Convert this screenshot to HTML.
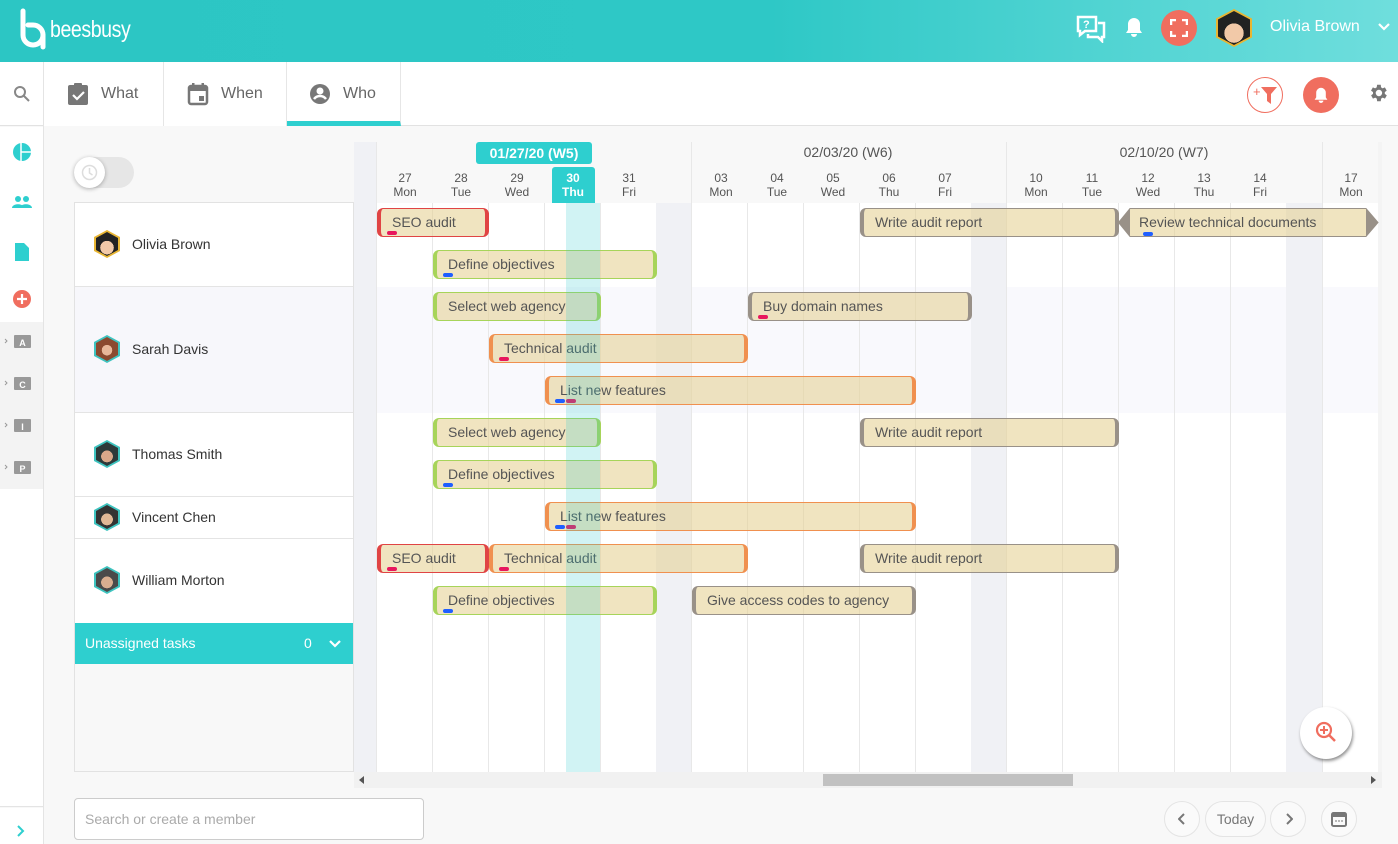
<!DOCTYPE html>
<html><head><meta charset="utf-8">
<style>
*{box-sizing:border-box;margin:0;padding:0}
body{width:1398px;height:844px;overflow:hidden;font-family:"Liberation Sans",sans-serif;background:#f8f8f8;position:relative;color:#333}
.a{position:absolute}
.top{left:0;top:0;width:1398px;height:62px;background:linear-gradient(90deg,#2cc6c4 0%,#2ec8c6 55%,#6fdedd 100%)}
.tab{top:62px;height:64px;background:#fff;border-right:1px solid #e6e6e6;font-size:16px;color:#666;display:flex;align-items:center}
.vl{width:1px;background:#e8e8e8}
.day{width:56px;text-align:center;font-size:12px;color:#555;line-height:14px}
.bar{height:29px;border-radius:6px;background:rgba(228,206,140,.55);border:1px solid;border-left-width:4px;border-right-width:4px;font-size:14px;color:#555;padding-left:11px;line-height:26px;white-space:nowrap}
.r{border-color:#e04444}.g{border-color:#a7d45a}.o{border-color:#f0904f}.y{border-color:#999188}
.tg{position:absolute;bottom:1px;width:10px;height:4px;border-radius:2px}
.pk{background:#e8175d}.bl{background:#1f5fff}
.name{font-size:14px;color:#333;left:132px}
.hex{width:26px;height:28px;clip-path:polygon(50% 0,100% 25%,100% 75%,50% 100%,0 75%,0 25%)}
.rb{border:1px solid #e4e4e4;border-radius:50%;background:#fafafa}
</style></head><body>
<div class="a top"></div>
<svg class="a" style="left:18px;top:8px" width="30" height="42" viewBox="0 0 30 42"><path d="M5 3v24a10 10 0 1 0 10-10h-5" fill="none" stroke="#fff" stroke-width="5" stroke-linecap="round"/><path d="M25 27v12" stroke="#fff" stroke-width="5" stroke-linecap="round"/></svg>
<div class="a" style="left:50px;top:16px;color:#fff;font-size:23px;letter-spacing:-0.5px;transform:scaleX(.85);transform-origin:left">beesbusy</div>
<svg class="a" style="left:1076px;top:15px" width="30" height="28" viewBox="0 0 30 28"><path d="M2 2h18v14H9l-5 4v-4H2z" fill="none" stroke="#fff" stroke-width="2.5"/><path d="M22 8h6v14h-2v4l-4-4H12v-3" fill="none" stroke="#fff" stroke-width="2.5"/><text x="7" y="13" fill="#fff" font-size="11" font-family="Liberation Sans" font-weight="bold">?</text></svg>
<svg class="a" style="left:1124px;top:16px" width="20" height="22" viewBox="0 0 20 22"><path d="M10 2a6 6 0 0 0-6 6v6l-2 3h16l-2-3V8a6 6 0 0 0-6-6z M7 18a3 3 0 0 0 6 0z" fill="#fff"/></svg>
<div class="a" style="left:1161px;top:10px;width:36px;height:36px;border-radius:50%;background:#f06e5f"></div>
<svg class="a" style="left:1170px;top:19px" width="18" height="18" viewBox="0 0 18 18" fill="none" stroke="#fff" stroke-width="2.5"><path d="M1 6V1h5M12 1h5v5M17 12v5h-5M6 17H1v-5"/></svg>
<div class="a hex" style="left:1216px;top:9px;width:36px;height:38px;background:#e8b533"></div>
<div class="a hex" style="left:1218px;top:11px;width:32px;height:34px;background:radial-gradient(circle at 50% 65%,#f2c9a8 0 35%,#222 36%)"></div>
<div class="a" style="left:1270px;top:18px;color:#fff;font-size:16px">Olivia Brown</div>
<svg class="a" style="left:1377px;top:22px" width="14" height="10"><path d="M2 2l5 5 5-5" fill="none" stroke="#fff" stroke-width="2.2"/></svg>
<div class="a" style="left:0;top:62px;width:1398px;height:64px;background:#fff;border-bottom:1px solid #e2e2e2"></div>
<div class="a" style="left:43px;top:62px;width:1px;height:782px;background:#e4e4e4"></div>
<svg class="a" style="left:13px;top:85px" width="18" height="18"><circle cx="7" cy="7" r="5" fill="none" stroke="#888" stroke-width="2"/><path d="M11 11l5 5" stroke="#888" stroke-width="2"/></svg>
<div class="a tab" style="left:44px;width:120px"><svg style="margin-left:23px" width="22" height="24" viewBox="0 0 22 24"><rect x="1" y="3" width="20" height="20" rx="2" fill="#777"/><rect x="7" y="1" width="8" height="5" rx="1" fill="#777"/><path d="M6 13l4 4 7-7" fill="none" stroke="#fff" stroke-width="2.2"/></svg><span style="margin-left:12px">What</span></div>
<div class="a tab" style="left:164px;width:123px"><svg style="margin-left:23px" width="22" height="24" viewBox="0 0 22 24"><rect x="2" y="4" width="18" height="18" rx="2" fill="none" stroke="#777" stroke-width="2.5"/><rect x="2" y="4" width="18" height="5" fill="#777"/><rect x="5" y="1" width="2.5" height="5" fill="#777"/><rect x="14.5" y="1" width="2.5" height="5" fill="#777"/><rect x="12" y="14" width="5" height="5" fill="#777"/></svg><span style="margin-left:12px">When</span></div>
<div class="a tab" style="left:287px;width:114px;border-bottom:5px solid #2ecfcf"><svg style="margin-left:22px;margin-top:4px" width="22" height="22" viewBox="0 0 22 22"><circle cx="11" cy="11" r="10" fill="#777"/><circle cx="11" cy="8" r="3.5" fill="#fff"/><path d="M5 16c3-4 9-4 12 0" fill="none" stroke="#fff" stroke-width="2.5"/></svg><span style="margin-left:12px;margin-top:4px">Who</span></div>
<div class="a" style="left:1247px;top:77px;width:36px;height:36px;border-radius:50%;border:1.5px solid #f06e5f;background:#fff"></div>
<div class="a" style="left:1253px;top:84px;color:#f06e5f;font-size:13px">+</div>
<svg class="a" style="left:1261px;top:87px" width="16" height="17"><path d="M0 0h16l-6 7v10l-4-3V7z" fill="#f06e5f"/></svg>
<div class="a" style="left:1303px;top:77px;width:36px;height:36px;border-radius:50%;background:#f06e5f"></div>
<svg class="a" style="left:1313px;top:86px" width="16" height="18" viewBox="0 0 20 22"><path d="M10 2a6 6 0 0 0-6 6v6l-2 3h16l-2-3V8a6 6 0 0 0-6-6z M7 18a3 3 0 0 0 6 0z" fill="#fff"/></svg>
<svg class="a" style="left:1367px;top:82px" width="22" height="22" viewBox="0 0 24 24"><path fill="#777" d="M19.4 13a7.5 7.5 0 0 0 0-2l2.1-1.6-2-3.5-2.5 1a7 7 0 0 0-1.7-1L15 3h-4l-.4 2.9a7 7 0 0 0-1.7 1l-2.5-1-2 3.5L6.6 11a7.5 7.5 0 0 0 0 2l-2.1 1.6 2 3.5 2.5-1a7 7 0 0 0 1.7 1L11 21h4l.4-2.9a7 7 0 0 0 1.7-1l2.5 1 2-3.5zM13 15.5a3.5 3.5 0 1 1 0-7 3.5 3.5 0 0 1 0 7z"/></svg>
<div class="a" style="left:0;top:127px;width:43px;height:195px;background:#fff"></div>
<div class="a" style="left:0;top:322px;width:43px;height:167px;background:#f3f3f3"></div>
<div class="a" style="left:0;top:489px;width:43px;height:318px;background:#fff;border-bottom:1px solid #e4e4e4"></div>
<div class="a" style="left:0;top:808px;width:43px;height:36px;background:#fff"></div>
<svg class="a" style="left:13px;top:143px" width="18" height="18"><circle cx="9" cy="9" r="9" fill="#2ecfcf"/><path d="M8 0v18M8 9h10" stroke="#fff" stroke-width="1.5"/></svg>
<svg class="a" style="left:12px;top:195px" width="20" height="14"><circle cx="6" cy="4" r="3" fill="#2ecfcf"/><circle cx="14" cy="4" r="3" fill="#2ecfcf"/><path d="M0 13c0-5 12-5 12 0zM8 13c0-5 12-5 12 0z" fill="#2ecfcf"/></svg>
<svg class="a" style="left:15px;top:243px" width="14" height="18"><path d="M0 0h9l5 5v13H0z" fill="#2ecfcf"/></svg>
<svg class="a" style="left:13px;top:290px" width="18" height="18"><circle cx="9" cy="9" r="9" fill="#f06e5f"/><path d="M9 4v10M4 9h10" stroke="#fff" stroke-width="2.2"/></svg>
<svg class="a" style="left:3px;top:334px" width="30" height="150"><g fill="#999"><path d="M2 5l2 2-2 2" stroke="#999" fill="none"/><path d="M2 47l2 2-2 2" stroke="#999" fill="none"/><path d="M2 89l2 2-2 2" stroke="#999" fill="none"/><path d="M2 131l2 2-2 2" stroke="#999" fill="none"/><rect x="11" y="1" width="17" height="13" rx="1"/><rect x="11" y="43" width="17" height="13" rx="1"/><rect x="11" y="85" width="17" height="13" rx="1"/><rect x="11" y="127" width="17" height="13" rx="1"/></g><g fill="#fff" font-size="9" font-family="Liberation Sans" font-weight="bold" text-anchor="middle"><text x="19.5" y="12">A</text><text x="19.5" y="54">C</text><text x="19.5" y="96">I</text><text x="19.5" y="138">P</text></g></svg>
<svg class="a" style="left:17px;top:825px" width="8" height="12"><path d="M1 1l5 5-5 5" fill="none" stroke="#2ecfcf" stroke-width="2"/></svg>
<div class="a" style="left:74px;top:157px;width:60px;height:31px;border-radius:16px;background:#e6e6e6"></div>
<div class="a" style="left:74px;top:157px;width:31px;height:31px;border-radius:50%;background:#fff;box-shadow:0 1px 4px rgba(0,0,0,.3)"></div>
<svg class="a" style="left:81px;top:164px" width="17" height="17"><circle cx="8.5" cy="8.5" r="7" fill="none" stroke="#ddd" stroke-width="1.5"/><path d="M8.5 4v5l3 2" fill="none" stroke="#ddd" stroke-width="1.5"/></svg>
<div class="a" style="left:74px;top:202px;width:280px;height:570px;background:#f8f8f8;border:1px solid #e2e2e2"></div>
<div class="a" style="left:75px;top:203px;width:278px;height:84px;background:#fff;border-bottom:1px solid #e4e4e4"></div>
<div class="a" style="left:75px;top:287px;width:278px;height:126px;background:#f7f7fb;border-bottom:1px solid #e4e4e4"></div>
<div class="a" style="left:75px;top:413px;width:278px;height:84px;background:#fff;border-bottom:1px solid #e4e4e4"></div>
<div class="a" style="left:75px;top:497px;width:278px;height:42px;background:#fff;border-bottom:1px solid #e4e4e4"></div>
<div class="a" style="left:75px;top:539px;width:278px;height:84px;background:#fff"></div>
<div class="a" style="left:75px;top:623px;width:278px;height:41px;background:#2ecfcf;color:#fff;font-size:14px;line-height:41px;padding-left:10px">Unassigned tasks<span style="position:absolute;left:229px">0</span></div>
<svg class="a" style="left:328px;top:639px" width="14" height="10"><path d="M2 2l5 5 5-5" fill="none" stroke="#fff" stroke-width="2.2"/></svg>
<div class="a hex" style="left:94px;top:230px;background:#e8b533"></div><div class="a hex" style="left:96px;top:232px;width:22px;height:24px;background:radial-gradient(circle at 50% 65%,#f2c9a8 0 35%,#222 36%)"></div>
<div class="a hex" style="left:94px;top:335px;background:#3ec4c0"></div><div class="a hex" style="left:96px;top:337px;width:22px;height:24px;background:radial-gradient(circle at 50% 55%,#e8b89a 0 30%,#8b4a2f 31%)"></div>
<div class="a hex" style="left:94px;top:440px;background:#3ec4c0"></div><div class="a hex" style="left:96px;top:442px;width:22px;height:24px;background:radial-gradient(circle at 50% 60%,#d9a88a 0 32%,#2d3a3a 33%)"></div>
<div class="a hex" style="left:94px;top:503px;background:#3ec4c0"></div><div class="a hex" style="left:96px;top:505px;width:22px;height:24px;background:radial-gradient(circle at 50% 60%,#e0b896 0 32%,#333 33%)"></div>
<div class="a hex" style="left:94px;top:566px;background:#3ec4c0"></div><div class="a hex" style="left:96px;top:568px;width:22px;height:24px;background:radial-gradient(circle at 50% 60%,#d8ae90 0 32%,#4a4a4a 33%)"></div>
<div class="a name" style="top:236px">Olivia Brown</div>
<div class="a name" style="top:341px">Sarah Davis</div>
<div class="a name" style="top:446px">Thomas Smith</div>
<div class="a name" style="top:509px">Vincent Chen</div>
<div class="a name" style="top:572px">William Morton</div>
<div class="a" style="left:354px;top:203px;width:1028px;height:569px;background:#fff"></div>
<div class="a" style="left:354px;top:287px;width:1028px;height:126px;background:#f9f9fd"></div>
<div class="a" style="left:354px;top:142px;width:23px;height:630px;background:#f0f1f5"></div>
<div class="a" style="left:656px;top:203px;width:35px;height:569px;background:#f0f1f5"></div>
<div class="a" style="left:971px;top:203px;width:35px;height:569px;background:#f0f1f5"></div>
<div class="a" style="left:1286px;top:203px;width:36px;height:569px;background:#f0f1f5"></div>
<div class="a" style="left:1378px;top:142px;width:4px;height:630px;background:#f4f4f4"></div>
<div class="a vl" style="left:432px;top:203px;height:569px"></div><div class="a vl" style="left:488px;top:203px;height:569px"></div><div class="a vl" style="left:544px;top:203px;height:569px"></div><div class="a vl" style="left:600px;top:203px;height:569px"></div>
<div class="a vl" style="left:747px;top:203px;height:569px"></div><div class="a vl" style="left:803px;top:203px;height:569px"></div><div class="a vl" style="left:859px;top:203px;height:569px"></div><div class="a vl" style="left:915px;top:203px;height:569px"></div>
<div class="a vl" style="left:1062px;top:203px;height:569px"></div><div class="a vl" style="left:1118px;top:203px;height:569px"></div><div class="a vl" style="left:1174px;top:203px;height:569px"></div><div class="a vl" style="left:1230px;top:203px;height:569px"></div>
<div class="a vl" style="left:376px;top:142px;height:630px"></div><div class="a vl" style="left:691px;top:142px;height:630px"></div><div class="a vl" style="left:1006px;top:142px;height:630px"></div><div class="a vl" style="left:1322px;top:142px;height:630px"></div>
<div class="a" style="left:476px;top:142px;width:116px;height:22px;border-radius:3px;background:#2ecfcf;color:#fff;font-size:14px;text-align:center;line-height:22px;font-weight:bold">01/27/20 (W5)</div>
<div class="a" style="left:780px;top:144px;width:136px;text-align:center;font-size:14px;color:#555">02/03/20 (W6)</div>
<div class="a" style="left:1096px;top:144px;width:136px;text-align:center;font-size:14px;color:#555">02/10/20 (W7)</div>
<div class="a" style="left:552px;top:167px;width:43px;height:36px;border-radius:3px 3px 0 0;background:#2ecfcf"></div>
<div class="a" style="left:377px;top:171px;display:flex">
<div class="day">27<br>Mon</div><div class="day">28<br>Tue</div><div class="day">29<br>Wed</div><div class="day" style="color:#fff;font-weight:bold">30<br>Thu</div><div class="day">31<br>Fri</div></div>
<div class="a" style="left:693px;top:171px;display:flex">
<div class="day">03<br>Mon</div><div class="day">04<br>Tue</div><div class="day">05<br>Wed</div><div class="day">06<br>Thu</div><div class="day">07<br>Fri</div></div>
<div class="a" style="left:1008px;top:171px;display:flex">
<div class="day">10<br>Mon</div><div class="day">11<br>Tue</div><div class="day">12<br>Wed</div><div class="day">13<br>Thu</div><div class="day">14<br>Fri</div></div>
<div class="a" style="left:1323px;top:171px;display:flex"><div class="day">17<br>Mon</div></div>
<div class="a bar r" style="left:377px;top:208px;width:112px">SEO audit<i class="tg pk" style="left:6px"></i></div>
<div class="a bar y" style="left:860px;top:208px;width:259px">Write audit report</div>
<svg class="a" style="left:1118px;top:208px" width="262" height="29"><path d="M12 .5H248L260 14.5 248 28.5H12L.5 14.5z" fill="rgba(228,206,140,.55)" stroke="#999188"/><path d="M12 .5v28L.5 14.5z" fill="#999188"/><path d="M248 .5v28L260 14.5z" fill="#999188"/></svg>
<div class="a" style="left:1139px;top:208px;font-size:14px;color:#555;line-height:28px">Review technical documents</div>
<i class="a tg bl" style="left:1143px;top:232px"></i>
<div class="a bar g" style="left:433px;top:250px;width:224px">Define objectives<i class="tg bl" style="left:6px"></i></div>
<div class="a bar g" style="left:433px;top:292px;width:168px">Select web agency</div>
<div class="a bar y" style="left:748px;top:292px;width:224px">Buy domain names<i class="tg pk" style="left:6px"></i></div>
<div class="a bar o" style="left:489px;top:334px;width:259px">Technical audit<i class="tg pk" style="left:6px"></i></div>
<div class="a bar o" style="left:545px;top:376px;width:371px">List new features<i class="tg bl" style="left:6px"></i><i class="tg pk" style="left:17px"></i></div>
<div class="a bar g" style="left:433px;top:418px;width:168px">Select web agency</div>
<div class="a bar y" style="left:860px;top:418px;width:259px">Write audit report</div>
<div class="a bar g" style="left:433px;top:460px;width:224px">Define objectives<i class="tg bl" style="left:6px"></i></div>
<div class="a bar o" style="left:545px;top:502px;width:371px">List new features<i class="tg bl" style="left:6px"></i><i class="tg pk" style="left:17px"></i></div>
<div class="a bar r" style="left:377px;top:544px;width:112px">SEO audit<i class="tg pk" style="left:6px"></i></div>
<div class="a bar o" style="left:489px;top:544px;width:259px">Technical audit<i class="tg pk" style="left:6px"></i></div>
<div class="a bar y" style="left:860px;top:544px;width:259px">Write audit report</div>
<div class="a bar g" style="left:433px;top:586px;width:224px">Define objectives<i class="tg bl" style="left:6px"></i></div>
<div class="a bar y" style="left:692px;top:586px;width:224px">Give access codes to agency</div>
<div class="a" style="left:566px;top:203px;width:34px;height:569px;background:rgba(46,200,205,.22)"></div>
<div class="a" style="left:354px;top:772px;width:1028px;height:16px;background:#f1f1f1"></div>
<div class="a" style="left:823px;top:774px;width:250px;height:12px;background:#c1c1c1"></div>
<svg class="a" style="left:359px;top:776px" width="6" height="8"><path d="M5 0v8L0 4z" fill="#555"/></svg>
<svg class="a" style="left:1371px;top:776px" width="6" height="8"><path d="M0 0v8l5-4z" fill="#555"/></svg>
<div class="a" style="left:1300px;top:707px;width:52px;height:52px;border-radius:50%;background:#fff;box-shadow:1px 2px 3px rgba(0,0,0,.45)"></div>
<svg class="a" style="left:1315px;top:721px" width="22" height="22"><circle cx="9" cy="9" r="7" fill="none" stroke="#f06e5f" stroke-width="2.2"/><path d="M14 14l6 6" stroke="#f06e5f" stroke-width="2.5"/><path d="M9 5v8M5 9h8" stroke="#f06e5f" stroke-width="2"/></svg>
<div class="a" style="left:74px;top:798px;width:350px;height:42px;border:1px solid #ccc;border-radius:4px;background:#fff;font-size:14px;color:#aaa;padding-left:10px;line-height:40px">Search or create a member</div>
<div class="a rb" style="left:1164px;top:801px;width:36px;height:36px"></div>
<svg class="a" style="left:1178px;top:813px" width="8" height="12"><path d="M6 1L1 6l5 5" fill="none" stroke="#777" stroke-width="2"/></svg>
<div class="a rb" style="left:1205px;top:801px;width:61px;height:36px;border-radius:18px;font-size:14px;color:#777;text-align:center;line-height:34px">Today</div>
<div class="a rb" style="left:1270px;top:801px;width:36px;height:36px"></div>
<svg class="a" style="left:1285px;top:813px" width="8" height="12"><path d="M2 1l5 5-5 5" fill="none" stroke="#777" stroke-width="2"/></svg>
<div class="a rb" style="left:1321px;top:801px;width:36px;height:36px"></div>
<svg class="a" style="left:1331px;top:810px" width="16" height="17"><rect x="1" y="3" width="14" height="13" rx="1.5" fill="none" stroke="#777" stroke-width="2"/><rect x="1" y="3" width="14" height="4" fill="#777"/><path d="M4 11h8" stroke="#777" stroke-dasharray="2 1"/></svg>
</body></html>
